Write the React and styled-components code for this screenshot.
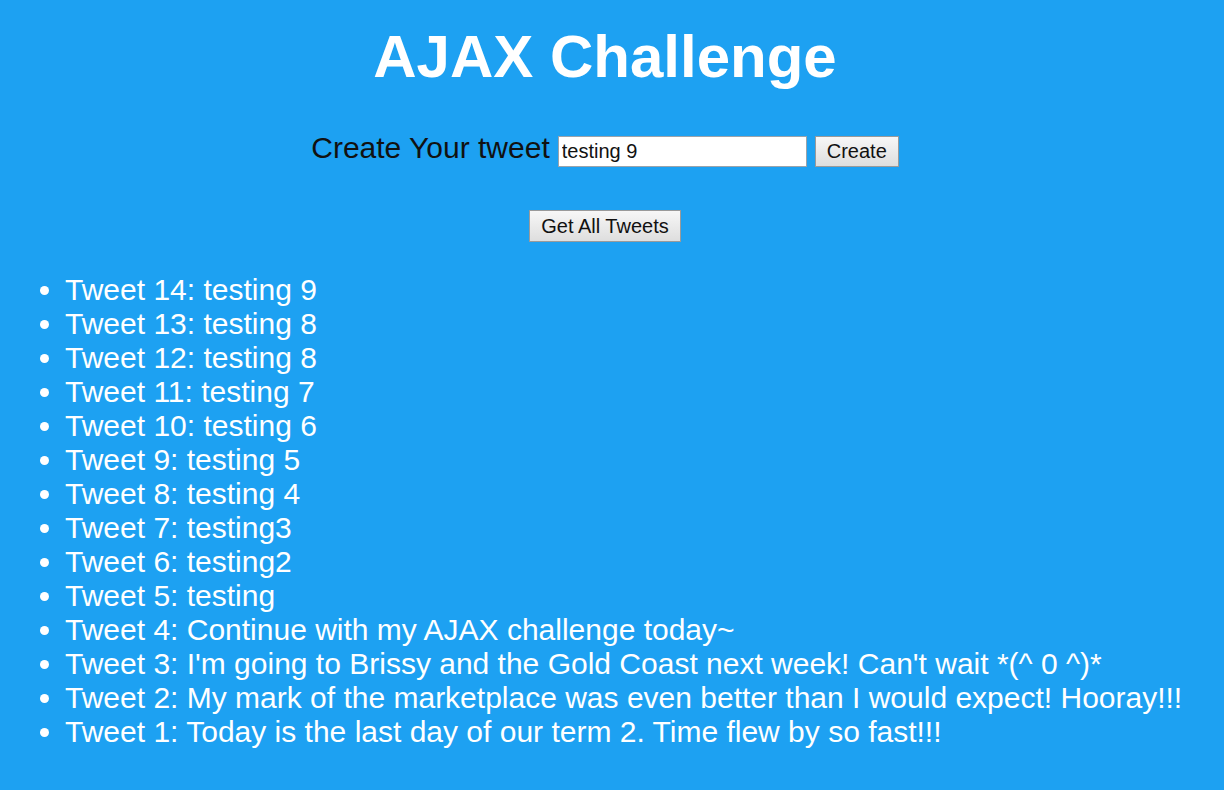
import React, { useState } from 'react';
import styled, { createGlobalStyle } from 'styled-components';

const GlobalStyle = createGlobalStyle`
  html, body {
    margin: 0;
    padding: 0;
    overflow: hidden;
    background: #1da1f2;
    font-family: "Liberation Sans", Arial, sans-serif;
  }
`;

const Page = styled.div`
  padding: 22px 14px 40px 0;
`;

const Title = styled.h1`
  margin: 0;
  text-align: center;
  font-size: 60px;
  font-weight: bold;
  color: #fff;
  line-height: 69px;
`;

const Form = styled.form`
  display: flex;
  justify-content: center;
  align-items: baseline;
  margin-top: 40px;
`;

const Label = styled.label`
  font-size: 30px;
  color: #111;
  margin-right: 8px;
`;

const Input = styled.input`
  box-sizing: border-box;
  width: 249px;
  height: 31px;
  padding: 1px 3px;
  border: 1px solid #9aa3ab;
  background: #fff;
  font-family: "Liberation Sans", Arial, sans-serif;
  font-size: 20px;
  color: #111;
  outline: none;
`;

const Button = styled.button`
  box-sizing: border-box;
  height: ${p => p.h}px;
  padding: 0 ${p => p.px}px;
  margin-left: ${p => p.ml || 0}px;
  border: 1px solid #9a9a9a;
  border-radius: 0;
  background: linear-gradient(#f7f7f7, #dedede);
  font-family: "Liberation Sans", Arial, sans-serif;
  font-size: 20px;
  color: #111;
  cursor: pointer;
`;

const Center = styled.div`
  display: flex;
  justify-content: center;
  margin-top: 43px;
`;

const List = styled.ul`
  margin: 31px 0 0;
  padding-left: 65px;
  color: #fff;
  font-size: 30px;
  line-height: 34px;
`;

const tweets = [
  'testing 9',
  'testing 8',
  'testing 8',
  'testing 7',
  'testing 6',
  'testing 5',
  'testing 4',
  'testing3',
  'testing2',
  'testing',
  'Continue with my AJAX challenge today~',
  "I'm going to Brissy and the Gold Coast next week! Can't wait *(^ 0 ^)*",
  'My mark of the marketplace was even better than I would expect! Hooray!!!',
  'Today is the last day of our term 2. Time flew by so fast!!!',
];

export default function App() {
  const [text, setText] = useState('testing 9');

  return (
    <Page>
      <GlobalStyle />
      <Title>AJAX Challenge</Title>
      <Form onSubmit={e => e.preventDefault()}>
        <Label htmlFor="tweet">Create Your tweet</Label>
        <Input id="tweet" value={text} onChange={e => setText(e.target.value)} />
        <Button type="submit" h={31} px={11} ml={8}>Create</Button>
      </Form>
      <Center>
        <Button type="button" h={32} px={11}>Get All Tweets</Button>
      </Center>
      <List>
        {tweets.map((t, i) => (
          <li key={i}>Tweet {tweets.length - i}: {t}</li>
        ))}
      </List>
    </Page>
  );
}
